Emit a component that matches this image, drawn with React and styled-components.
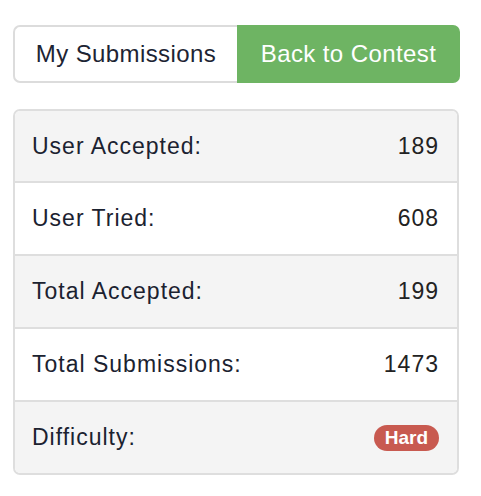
import React from 'react';
import styled, { createGlobalStyle } from 'styled-components';

const Global = createGlobalStyle`
  body {
    margin: 0;
    background: #fff;
    font-family: "Liberation Sans", Arial, sans-serif;
  }
`;

const Page = styled.div`
  padding: 25px 21px 0 13px;
`;

const ButtonGroup = styled.div`
  display: flex;
  height: 58px;
`;

const Button = styled.button`
  flex: ${(p) => (p.primary ? '0 0 223px' : '0 0 224px')};
  box-sizing: border-box;
  height: 100%;
  margin: 0;
  display: flex;
  align-items: center;
  justify-content: center;
  font-family: "Liberation Sans", Arial, sans-serif;
  font-size: 24px;
  letter-spacing: 0.4px;
  cursor: pointer;
  color: ${(p) => (p.primary ? '#fff' : '#1d2433')};
  background: ${(p) => (p.primary ? '#6eb463' : '#fff')};
  border: 2px solid ${(p) => (p.primary ? '#6eb463' : '#dcdcdc')};
  border-radius: ${(p) => (p.primary ? '0 7px 7px 0' : '7px 0 0 7px')};
  ${(p) => (p.primary ? '' : 'border-right: none;')}
`;

const Panel = styled.div`
  margin-top: 26px;
  width: 446px;
  box-sizing: border-box;
  border: 2px solid #dedede;
  border-radius: 7px;
  overflow: hidden;
`;

const Row = styled.div`
  display: flex;
  align-items: center;
  justify-content: space-between;
  height: ${(p) => (p.first ? '70px' : '71px')};
  padding: 0 18px 0 17px;
  background: ${(p) => (p.shaded ? '#f4f4f4' : '#fff')};
  border-top: ${(p) => (p.first ? 'none' : '2px solid #dedede')};
`;

const Label = styled.span`
  font-size: 23px;
  letter-spacing: 1px;
  color: #1b2230;
`;

const Value = styled.span`
  font-size: 23px;
  letter-spacing: 1px;
  color: #222;
`;

const Badge = styled.span`
  display: inline-flex;
  align-items: center;
  height: 26px;
  padding: 0 11px;
  border-radius: 13px;
  background: #c85a50;
  color: #fff;
  font-weight: bold;
  font-size: 19px;
`;

const stats = [
  { label: 'User Accepted:', value: '189' },
  { label: 'User Tried:', value: '608' },
  { label: 'Total Accepted:', value: '199' },
  { label: 'Total Submissions:', value: '1473' },
];

export default function App() {
  return (
    <Page>
      <Global />
      <ButtonGroup>
        <Button>My Submissions</Button>
        <Button primary>Back to Contest</Button>
      </ButtonGroup>
      <Panel>
        {stats.map((s, i) => (
          <Row key={s.label} first={i === 0} shaded={i % 2 === 0}>
            <Label>{s.label}</Label>
            <Value>{s.value}</Value>
          </Row>
        ))}
        <Row shaded>
          <Label>Difficulty:</Label>
          <Badge>Hard</Badge>
        </Row>
      </Panel>
    </Page>
  );
}
